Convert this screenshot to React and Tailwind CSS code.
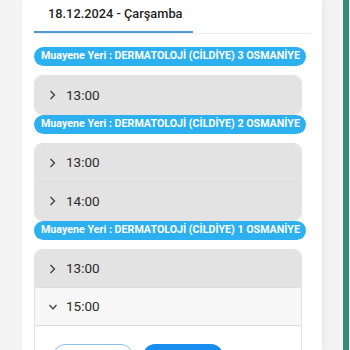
import React from 'react';

const sections = [
    { place: 'DERMATOLOJİ (CİLDİYE) 3 OSMANİYE', times: ['13:00'] },
    { place: 'DERMATOLOJİ (CİLDİYE) 2 OSMANİYE', times: ['13:00', '14:00'] },
    { place: 'DERMATOLOJİ (CİLDİYE) 1 OSMANİYE', times: ['13:00', '15:00'], open: '15:00' },
];

function Chevron({ down }) {
    return (
        <svg width="10" height="10" viewBox="0 0 10 10" className="shrink-0 text-[#333]">
            {down ? (
                <polyline points="1.5,3 5,6.8 8.5,3" fill="none" stroke="currentColor" strokeWidth="1.2" />
            ) : (
                <polyline points="2.5,1 6.5,5 2.5,9" fill="none" stroke="currentColor" strokeWidth="1.2" />
            )}
        </svg>
    );
}

function TimeRow({ time, open, last }) {
    return (
        <div
            className={`flex h-[38px] items-center gap-[8px] pl-[13px] ${open ? 'bg-[#f7f7f7]' : 'bg-[#e3e3e3]'} ${last && !open ? '' : 'border-b border-[#dcdcdc]'}`}
        >
            <Chevron down={open} />
            <span className="text-[13.5px] text-[#2a2a2a]">{time}</span>
        </div>
    );
}

export default function App() {
    return (
        <div className="flex h-[350px] w-[350px] overflow-hidden bg-[#f4f4f4]" style={{ fontFamily: 'Roboto, "Liberation Sans", sans-serif' }}>
            {/* left gutter */}
            <div className="w-[22px] shrink-0" />

            {/* card */}
            <div className="w-[300px] shrink-0 bg-white pl-[12px] pr-[11px] shadow-[2px_0_6px_rgba(0,0,0,0.06)]">
                {/* tab header */}
                <div className="flex border-b border-[#eeeeee]">
                    <div className="flex h-[33px] w-[159px] items-start border-b-2 border-[#4f98d3] pl-[14px] pt-[4px]">
                        <span className="whitespace-nowrap text-[12.8px] font-medium text-[#1f1f1f]">18.12.2024 - Çarşamba</span>
                    </div>
                </div>

                {sections.map((s, i) => (
                    <div key={i}>
                        <div className={`${i === 0 ? 'mt-[13px]' : ''} flex h-[19px] w-[272px] items-center rounded-full bg-[#2cb0ef] pl-[7px]`}>
                            <span className="whitespace-nowrap text-[10.7px] font-bold text-white">Muayene Yeri : {s.place}</span>
                        </div>
                        <div className="mt-[9px] w-[268px] overflow-hidden rounded-lg border border-[#e3e3e3]">
                            {s.times.map((t, j) => (
                                <TimeRow key={t} time={t} open={s.open === t} last={j === s.times.length - 1} />
                            ))}
                            {s.open && (
                                <div className="flex gap-[10px] bg-white px-[18px] pb-4 pt-[18px]">
                                    <button aria-label="Vazgeç" className="h-[32px] w-[80px] rounded-[12px] border border-[#8cc0e6]" />
                                    <button aria-label="Onayla" className="h-[32px] w-[80px] rounded-[12px] bg-[#1a8ef0]" />
                                </div>
                            )}
                        </div>
                    </div>
                ))}
            </div>

            {/* right gutter */}
            <div className="w-[21px] shrink-0" />
            <div className="w-[6px] shrink-0 bg-[#3b8a80]" />
            <div className="flex-1 bg-[#f7f7f7]" />
        </div>
    );
}
